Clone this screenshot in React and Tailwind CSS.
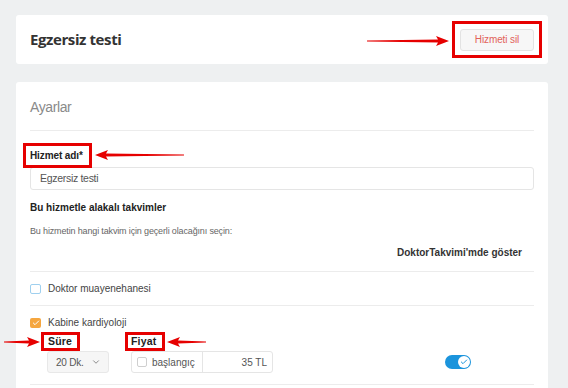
import { ChevronDown, Check } from 'lucide-react';

const arial = { fontFamily: '"Liberation Sans", Arial, sans-serif' };

/**
 * Red annotation box drawn round a label
 */
function Marked({ children, className = '' }) {
  return (
    <span className="relative inline-block">
      {children}
      <span className={`absolute border-[3px] border-[#e60000] ${className}`} />
    </span>
  );
}

function arrowPoints(x0, x1, y) {
  const dir = x1 > x0 ? 1 : -1;
  const neck = x1 - dir * 11;
  const back = x1 - dir * 13;
  return [
    [x0, y - 0.6],
    [neck, y - 1.6],
    [back, y - 5],
    [x1, y],
    [back, y + 5],
    [neck, y + 1.6],
    [x0, y + 0.6],
  ]
    .map((p) => p.join(','))
    .join(' ');
}

/**
 * Overlay with the red arrows of the annotated screenshot
 */
function Arrows() {
  const arrows = [
    [367, 449, 41],
    [184, 95, 155],
    [4, 40, 342],
    [206, 167, 342],
  ];
  return (
    <svg
      className="pointer-events-none absolute left-0 top-0"
      width="568"
      height="388"
      viewBox="0 0 568 388"
    >
      {arrows.map(([a, b, y], i) => (
        <polygon key={i} points={arrowPoints(a, b, y)} fill="#e60000" />
      ))}
    </svg>
  );
}

function Divider({ className = '' }) {
  return <div className={`h-px bg-[#ececec] ${className}`} />;
}

export default function App() {
  return (
    <div
      className="relative h-[388px] w-[568px] overflow-hidden bg-[#eef0f1] pl-4 pr-5 pt-[15px]"
      style={arial}
    >
      {/* header card */}
      <div className="flex h-[49px] items-center justify-between rounded-[3px] bg-white pl-[14px] pr-[14px]">
        <h1
          className="text-[15px] font-bold leading-none tracking-[-0.4px] text-[#333]"
          style={{ fontFamily: '"Open Sans", sans-serif' }}
        >
          Egzersiz testi
        </h1>
        <Marked className="-left-[8px] -right-[8px] -top-[8px] -bottom-[7px]">
          <button className="flex h-[22px] w-[74px] items-center justify-center rounded-[3px] border border-[#e3e3e3] bg-[#f7f7f7] text-[10px] tracking-[-0.1px] text-[#e2625a]">
            Hizmeti sil
          </button>
        </Marked>
      </div>

      {/* settings card */}
      <div className="mt-[18px] h-[400px] rounded-[3px] bg-white px-[14px] pt-[16px]">
        <div className="text-[14px] leading-[18px] tracking-[-0.4px] text-[#8a8a8a]">Ayarlar</div>
        <Divider className="mt-[14px]" />

        <div className="mt-[18px] text-[10px] font-bold leading-[14px] tracking-[-0.1px] text-[#222]">
          <Marked className="-left-[7px] -right-[9px] -top-[6px] -bottom-[5px]">
            Hizmet adı*
          </Marked>
        </div>
        <div className="mt-[4px] flex h-[23px] items-center rounded-[3px] border border-[#e5e5e5] px-[9px] text-[10.5px] tracking-[-0.3px] text-[#555]">
          Egzersiz testi
        </div>

        <div className="mt-[11px] text-[10px] font-bold leading-[14px] text-[#222]">
          Bu hizmetle alakalı takvimler
        </div>
        <div className="mt-[10px] text-[9px] leading-[12px] tracking-[-0.15px] text-[#666]">
          Bu hizmetin hangi takvim için geçerli olacağını seçin:
        </div>
        <div className="mt-[9px] pr-[12px] text-right text-[10px] font-bold leading-[14px] text-[#333]">
          DoktorTakvimi'mde göster
        </div>
        <Divider className="mt-[11px]" />

        <label className="flex h-[33px] items-center gap-[7px] text-[10px] text-[#444]">
          <span className="h-[10px] w-[11px] rounded-[2px] border border-[#9fd0ef]" />
          Doktor muayenehanesi
        </label>
        <Divider />

        <div className="pt-[12px]">
          <label className="flex items-center gap-[7px] text-[10px] leading-[10px] text-[#444]">
            <span className="flex h-[10px] w-[11px] items-center justify-center rounded-[2px] bg-[#f5a63f]">
              <Check size={8} strokeWidth={3} className="text-white" />
            </span>
            Kabine kardiyoloji
          </label>

          <div className="mt-[4px] flex items-start pl-[17px]">
            <div className="w-[84px]">
              <div className="pl-[1px] text-[10.5px] font-bold leading-[19px] tracking-[0.2px] text-[#222]">
                <Marked className="-left-[7px] -right-[8px] top-0 bottom-0">Süre</Marked>
              </div>
              <div className="flex h-[22px] w-[62px] items-center justify-between rounded-[3px] border border-[#e8e8e8] bg-[#f6f6f6] pl-[8px] pr-[7px] text-[10px] tracking-[-0.2px] text-[#555]">
                20 Dk.
                <ChevronDown size={10} strokeWidth={2} className="text-[#777]" />
              </div>
            </div>
            <div className="w-[142px]">
              <div className="text-[10.5px] font-bold leading-[19px] tracking-[0.2px] text-[#222]">
                <Marked className="-left-[6px] -right-[8px] top-0 bottom-0">Fiyat</Marked>
              </div>
              <div className="flex h-[22px] items-center rounded-[3px] border border-[#e5e5e5] text-[10px] text-[#555]">
                <div className="flex h-full w-[71px] items-center gap-[5px] border-r border-[#e5e5e5] pl-[5px]">
                  <span className="h-[10px] w-[10px] rounded-[2px] border border-[#cfcfcf]" />
                  başlangıç
                </div>
                <div className="flex-1 pr-[5px] text-right">35 TL</div>
              </div>
            </div>
            <div className="ml-auto mr-[63px] mt-[23px] flex h-[14px] w-[26px] items-center justify-end rounded-full bg-[#1b94dc] pr-[1px]">
              <span className="flex h-[12px] w-[12px] items-center justify-center rounded-full bg-white">
                <Check size={8} strokeWidth={3} className="text-[#1b94dc]" />
              </span>
            </div>
          </div>
          <Divider className="mt-[11px]" />
        </div>
      </div>

      <Arrows />
    </div>
  );
}
